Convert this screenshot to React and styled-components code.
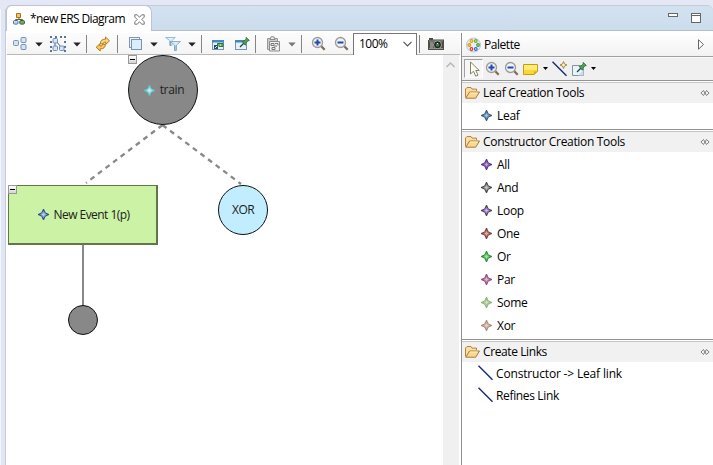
import React from "react";
import styled, { createGlobalStyle } from "styled-components";

const Global = createGlobalStyle`
  * { box-sizing: border-box; }
  html, body { margin: 0; padding: 0; background: #fff; }
  body { font: 12px/16px "Open Sans", "Noto Sans", sans-serif; color: #000; overflow: hidden; }
  svg { display: block; flex: none; overflow: visible; }
`;

const Window = styled.div`
  width: 713px; height: 465px; display: flex; background: #e4e8f6; overflow: hidden;
`;
const Gutter = styled.div`
  width: 6px; flex: none; background: #e1e6f6; border-right: 1px solid #c4cad6;
  margin-top: 9px; border-left: 1px solid #f6f7fc;
`;
const Editor = styled.main`
  flex: 1; min-width: 0; display: flex; flex-direction: column; padding-top: 5px;
`;
const TabBar = styled.header`
  height: 26px; flex: none; display: flex; align-items: stretch;
  background: linear-gradient(#d3e2f1, #cbdcec); border-top: 1px solid #c9cbd2;
  border-radius: 5px 6px 0 0; border-bottom: 1px solid #b4bccd;
`;
const Tab = styled.div`
  width: 146px; height: 26px; margin-top: -1px; display: flex; align-items: center;
  background: #fff; border: 1px solid #bdc3d0; border-bottom: 0; border-radius: 6px 7px 0 0;
  padding: 1px 6px 0 6px;
`;
const WindowButtons = styled.div`
  margin-left: auto; display: flex; gap: 13px; padding: 7px 12px 0 0;
`;
const Text = styled.span`
  white-space: pre; letter-spacing: ${(p) => p.$ls ?? -0.3}px; margin-left: ${(p) => p.$ml ?? 0}px;
`;
const Body = styled.div`
  flex: 1; min-height: 0; display: flex; background: #fff; padding: 2px 0 0 1px;
`;
const Work = styled.section`
  width: 453px; flex: none; display: flex; flex-direction: column;
`;
const Toolbar = styled.div`
  height: 22px; flex: none; display: flex; align-items: center; padding-top: 1px;
  background: linear-gradient(#fcfcfc, #f4f4f4); border-bottom: 1px solid #b8b8b8; padding-left: 5px;
`;
const Slot = styled.span`
  margin-left: ${(p) => p.$ml}px; flex: none; display: block;
`;
const Separator = styled.i`
  width: 1px; height: 18px; background: #858585; margin-left: ${(p) => p.$ml}px; flex: none;
`;
const ZoomBox = styled.div`
  width: 64px; height: 22px; flex: none; margin-left: 3px; background: #fff;
  border: 1px solid #777; border-bottom: 0; display: flex; align-items: center;
  justify-content: space-between; padding: 0 4px 1px 5px; align-self: flex-start; margin-top: -1px;
`;
const CanvasRow = styled.div`
  flex: 1; display: flex; min-height: 0;
`;
const Canvas = styled.div`
  flex: 1; position: relative; overflow: hidden; background: #fff; margin-left: 1px;
`;
const Scroll = styled.div`
  width: 16px; flex: none; background: #f0f0f0; padding: 7px 0 0 3px; margin-right: 1px;
`;
const Links = styled.svg`
  position: absolute; left: 0; top: 0;
`;
const Node = styled.div`
  position: absolute; left: ${(p) => p.$x}px; top: ${(p) => p.$y}px;
  width: ${(p) => p.$w}px; height: ${(p) => p.$h ?? p.$w}px;
  display: flex; align-items: center; justify-content: center;
  background: ${(p) => p.$bg}; color: #202020;
`;
const Circle = styled(Node)`
  border: 1px solid #0c1114; border-radius: 50%;
`;
const EventBox = styled(Node)`
  border: solid #62754b; border-width: 1px 2px 2px 1px;
`;
const Collapse = styled.span`
  position: absolute; left: ${(p) => p.$x}px; top: ${(p) => p.$y}px; width: 9px; height: 9px;
  background: linear-gradient(#fff, #d4d4d4); border: 1px solid #989898;
  display: flex; align-items: center; justify-content: center;
  &::after { content: ""; width: 5px; height: 1px; background: #000; }
`;
const Palette = styled.aside`
  flex: 1; min-width: 0; margin-left: 1px; border-left: 1px solid #8f8f8f; background: #fff;
`;
const PaletteHead = styled.div`
  height: 24px; display: flex; align-items: center; padding: 0 9px 0 4px;
  background: linear-gradient(#fff, #f2f2f2); border-bottom: 1px solid #a0a0a0;
`;
const PaletteTools = styled.div`
  height: 23px; display: flex; align-items: center; background: #f0f0f0;
  border-top: 1px solid #fafafa; padding: 0 0 1px 2px;
`;
const Pressed = styled.span`
  width: 19px; height: 19px; border: 1px solid; border-color: #a0a0a0 #fff #fff #a0a0a0;
  background: #f6f6f6; padding: 1px 0 0 2px; flex: none;
`;
const Drawer = styled.section`
  height: ${(p) => p.$h}px; border-top: 1px solid #929292;
`;
const DrawerHead = styled.div`
  height: 21px; display: flex; align-items: center; background: #f1f1f1; margin-top: 1px;
  border-top: 1px solid #c6c6c6; padding: 0 3px 1px;
`;
const Items = styled.div`
  padding-top: ${(p) => p.$pad ?? 1}px;
`;
const Item = styled.div`
  height: ${(p) => p.$h ?? 23}px; display: flex; align-items: center; padding-left: ${(p) => p.$pl ?? 19}px;
`;
const End = styled.span`
  margin-left: auto;
`;

const Svg = ({ w = 16, h = 16, children, crisp }) => (
  <svg width={w} height={h} viewBox={`0 0 ${w} ${h}`} fill="none" shapeRendering={crisp ? "crispEdges" : undefined}>
    {children}
  </svg>
);

const Arrow = ({ ml, color = "#222" }) => (
  <Slot $ml={ml}><Svg w={8} h={5}><path d="M0.3 .5H7.7L4 4.5Z" fill={color} /></Svg></Slot>
);

const Star = ({ edge, fill, light = "#fff" }) => (
  <Svg w={11} h={11}>
    <path d="M5 0h1L7.6 3.4 11 5v1L7.6 7.6 6 11H5L3.4 7.6 0 6V5l3.4-1.6Z" fill={edge} />
    <path d="M5.5 2 7 4l2 1.5L7 7 5.5 9 4 7 2 5.5 4 4Z" fill={fill} />
    <path d="M5 4h1v1h1v1H6v1H5V6H4V5h1z" fill={light} opacity=".4" />
  </Svg>
);

const Magnifier = ({ plus }) => (
  <Svg>
    <path d="m10.3 10.3 3.4 3.4" stroke="#826a55" strokeWidth="2.3" />
    <circle cx="6.5" cy="6.5" r="5" fill="#edf3ff" stroke="#a09a96" strokeWidth="1.3" />
    <path d={plus ? "M6.5 3.5v6M3.5 6.5h6" : "M3.5 6.5h6"} stroke="#2747ad" strokeWidth="2" />
  </Svg>
);

const DiagramIcon = () => (
  <Svg w={12} h={12}>
    <path d="M6 4v3M2.5 9V6.5h7V9" stroke="#6b5a3c" />
    <path d="M3.5 .5h4v4h-4z" fill="#f5c45c" stroke="#a3741d" />
    <rect x=".5" y="7.5" width="4.5" height="3.6" rx="1" fill="#c3d6ef" stroke="#54719d" />
    <rect x="6.8" y="7.5" width="4.6" height="3.6" rx="1" fill="#70b56b" stroke="#315f37" />
  </Svg>
);

const CloseIcon = () => (
  <Svg w={11} h={11}>
    <path d="M.8.8h2.5l2.2 2.5L7.7.8h2.5v2.3L7.8 5.5l2.4 2.4v2.3H7.7L5.5 7.7l-2.2 2.5H.8V7.9l2.4-2.4L.8 3.1Z" stroke="#66686c" fill="#fff" strokeWidth=".9" />
  </Svg>
);

const block = { fill: "#d5e4f5", stroke: "#7490b5" };
const BlocksIcon = () => (
  <Svg>
    <rect x="1.5" y="4.5" width="5" height="5" rx="1" {...block} />
    <rect x="9" y="1.5" width="5" height="5" rx="1" {...block} />
    <rect x="9" y="8.5" width="5" height="5" rx="1" {...block} />
  </Svg>
);
const SelectIcon = () => (
  <Svg>
    <path d="M0 0h2v2H0zM5 0h2v2H5zM10 0h2v2h-2zM14 0h2v2h-2zM0 5h2v2H0zM14 5h2v2h-2zM0 10h2v2H0zM14 10h2v2h-2zM0 14h2v2H0zM14 14h2v2h-2z" fill="#5a7398" />
    <path d="m6 5 5 6M5 7v4" stroke="#46658d" />
    <rect x="3" y="2.5" width="4.5" height="4.5" rx="1" {...block} />
    <rect x="3" y="10" width="4.5" height="4.5" rx="1" {...block} />
    <rect x="9.5" y="10" width="4.5" height="4.5" rx="1" {...block} />
  </Svg>
);
const RefreshIcon = () => (
  <Svg>
    <path d="M10.5 1 14.5 4.8 10.8 8.3V6.2C8.8 5.9 8.3 6.7 8 8L5.3 7.8C5.4 4.5 7.2 3 10.5 3.2Z" fill="#f9d67b" stroke="#b57b1d" />
    <path d="M5.2 15 1.2 11.2 4.9 7.8V9.9C6.9 10.2 7.5 9.4 7.8 8L10.4 8.3C10.3 11.5 8.5 13 5.2 12.8Z" fill="#f7ca5c" stroke="#b57b1d" />
  </Svg>
);
const LayersIcon = () => (
  <Svg crisp>
    <path d="M1.5 1.5h10v10h-10z" fill="#edf4fa" stroke="#8198b4" />
    <path d="M3.5 3.5h10v10h-10z" fill="#d9eef9" stroke="#7793b5" />
  </Svg>
);
const FilterIcon = () => (
  <Svg>
    <path d="M.5 1.5h9.8L7 4.5v5H4.8v-5Z" fill="#dff3fc" stroke="#9bbdd3" />
    <path d="M5.5 5.5h10L11.5 9v5.5H9.5V9Z" fill="#d5effa" stroke="#8eb1cb" />
    <path d="M5.3 5v4.5M10 9.5v5" stroke="#7199c5" />
  </Svg>
);
const PinShape = () => (
  <g>
    <path d="m6 11 4-4" stroke="#293f35" strokeWidth="1.2" />
    <path d="m8.3 5.5 1.5-.2 2.4-2.1V1.5l3.1 3-1.6.4-2.3 2.6-.1 1.7Z" fill="#57a35b" stroke="#28763b" />
  </g>
);
const WindowIcon = ({ pin }) => (
  <Svg>
    <rect x={pin ? 1.5 : 2.5} y="4.5" width="11" height="9" fill={pin ? "#e4f0fa" : "#e7eff1"} stroke="#7594b0" />
    <path d={pin ? "M1 4h12v2.5H1z" : "M2 4h12v2.5H2z"} fill="#4486bf" />
    {pin ? <PinShape /> : (
      <>
        <path d="M4 9h4v4H4z" fill="#234b73" />
        <path d="m5 12 5-5" stroke="#ddeef7" />
        <path d="M7.5 10.5v-3H13v3H9" fill="#64b15c" stroke="#277443" />
        <path d="M10 8.5h1v1h-1z" fill="#fff" />
      </>
    )}
  </Svg>
);
const NotePin = () => (
  <Svg>
    <path d="M1.5 4.5h11v10h-11z" fill="#e4f5fd" stroke="#87919b" />
    <path d="M7 14.5h5.5V9Z" fill="#c7def0" />
    <PinShape />
  </Svg>
);
const ClipboardIcon = () => (
  <Svg>
    <path d="M1.5 2.5h10v11h-10z" fill="#ccc" stroke="#969696" />
    <path d="M4 3.5 5 .8h3l1 2.7Z" fill="#eee" stroke="#8b8b8b" />
    <path d="M3.5 5.5h10v9.5h-10z" fill="#f1f1f1" stroke="#8b8b8b" />
    <path d="M5 7.5h3v2H5zM9 7.5h3v2M6 11.5h3v2H6zM8 10h3" stroke="#777" />
  </Svg>
);
const CameraIcon = () => (
  <Svg>
    <path d="M1 4V2h4v1.5h11V14H0V4Z" fill="#4b4e48" />
    <path d="M1 5h14M1 12.5h14" stroke="#92948c" />
    <path d="M2 6h3v6H2z" fill="#898b83" />
    <circle cx="9.5" cy="8.8" r="4" fill="#1d251f" stroke="#a7aaa0" />
    <circle cx="9.5" cy="8.8" r="1.9" fill="#467b50" />
    <path d="M9 7h1v1H9z" fill="#e8f3e9" />
  </Svg>
);
const PaletteIcon = () => (
  <Svg>
    <circle cx="7.5" cy="8" r="7" fill="#e5edf6" stroke="#b5c8dd" />
    <circle cx="5.5" cy="4" r="1.3" stroke="#dca414" fill="#fff0a0" strokeWidth="1.2" />
    <circle cx="9.8" cy="4" r="1.3" stroke="#7ba722" fill="#e5f5b5" strokeWidth="1.2" />
    <circle cx="3.3" cy="8" r="1.3" stroke="#ed9800" fill="#fd4" strokeWidth="1.2" />
    <circle cx="12" cy="8" r="1.3" stroke="#3d9a4c" fill="#c7edbb" strokeWidth="1.2" />
    <circle cx="5.5" cy="12" r="1.3" stroke="#dc3e26" fill="#fff" strokeWidth="1.2" />
    <circle cx="9.8" cy="12" r="1.3" stroke="#3b69b8" fill="#fff" strokeWidth="1.2" />
  </Svg>
);
const CursorIcon = () => (
  <Svg><path d="M3.5 1v12l3-2.8 2.2 5 2.3-1-2.2-4.7H12.3Z" fill="#fffef0" stroke="#77745f" strokeWidth=".9" /></Svg>
);
const NoteIcon = () => (
  <Svg>
    <path d="M.5 3.5h14v7l-3.5 3H.5Z" fill="#ffec70" stroke="#c59b16" />
    <path d="M1 9h13v2l-3 2H1Z" fill="#f9d738" />
    <path d="M11 13.5v-3h3.5Z" fill="#d7a719" />
  </Svg>
);
const LinkIcon = ({ spark }) => (
  <Svg>
    <path d={spark ? "m.5 .8 14 14" : "m.5-.3 14 14"} stroke="#152b7e" strokeWidth="1.4" />
    {spark && <path d="m11.5 .5 1 2.5 2.5 1-2.5 1-1 2.5-1-2.5L8 4l2.5-1Z" fill="#fff4c8" stroke="#a9883d" />}
  </Svg>
);
const FolderIcon = () => (
  <Svg w={15} h={12}>
    <path d="M.5 10.5V2L2 .5h4l1 1.6h4.5v2" fill="#f9dfa5" stroke="#b5833a" />
    <path d="M.8 11.2 4.5 5h10l-3.8 6.2Z" fill="#fad893" stroke="#ac7933" />
    <path d="M5 6h7.5" stroke="#fff1c4" />
  </Svg>
);
const UnpinIcon = () => (
  <Svg w={10} h={8}>
    <path d="M3.5 1.5 .9 4l2.6 2.5M6.5 1.5 9.1 4 6.5 6.5M3.5 1.5l3 5M6.5 1.5l-3 5" stroke="#77736c" strokeWidth=".9" />
  </Svg>
);

const constructors = [
  ["All", "#58368f", "#8d68b8"],
  ["And", "#4a4a4a", "#999"],
  ["Loop", "#4d4657", "#a080cf"],
  ["One", "#7a4343", "#bd7777"],
  ["Or", "#2f8e3b", "#70c477"],
  ["Par", "#a04680", "#b091a0"],
  ["Some", "#8ab878", "#b3c7a4"],
  ["Xor", "#b08f7d", "#c4b6ad"],
];

const DrawerTitle = ({ children, ls }) => (
  <DrawerHead>
    <FolderIcon /><Text $ml={3} $ls={ls}>{children}</Text><End><UnpinIcon /></End>
  </DrawerHead>
);

export default function App() {
  return (
    <Window>
      <Global />
      <Gutter />
      <Editor>
        <TabBar>
          <Tab>
            <DiagramIcon />
            <Text $ml={5} $ls={-0.6}>*new ERS Diagram</Text>
            <End><CloseIcon /></End>
          </Tab>
          <WindowButtons>
            <Svg w={10} h={10} crisp><path d="M.5.5h9v3h-9z" fill="#fff" stroke="#666" /></Svg>
            <Svg w={10} h={10} crisp><path d="M.5.5h9v9h-9zM.5 2.5h9" fill="#fff" stroke="#666" /></Svg>
          </WindowButtons>
        </TabBar>
        <Body>
          <Work>
            <Toolbar>
              <Slot $ml={0}><BlocksIcon /></Slot>
              <Arrow ml={7} />
              <Slot $ml={7}><SelectIcon /></Slot>
              <Arrow ml={7} />
              <Separator $ml={5} />
              <Slot $ml={8}><RefreshIcon /></Slot>
              <Separator $ml={6} />
              <Slot $ml={10}><LayersIcon /></Slot>
              <Arrow ml={6} />
              <Slot $ml={7}><FilterIcon /></Slot>
              <Arrow ml={7} />
              <Separator $ml={5} />
              <Slot $ml={8}><WindowIcon /></Slot>
              <Slot $ml={8}><WindowIcon pin /></Slot>
              <Separator $ml={5} />
              <Slot $ml={10}><ClipboardIcon /></Slot>
              <Arrow ml={6} color="#777" />
              <Separator $ml={5} />
              <Slot $ml={9}><Magnifier plus /></Slot>
              <Slot $ml={7}><Magnifier /></Slot>
              <ZoomBox>
                <Text $ls={-0.5}>100%</Text>
                <Svg w={9} h={6}><path d="m.5 .8 4 4 4-4" stroke="#555" strokeWidth="1.2" /></Svg>
              </ZoomBox>
              <Separator $ml={2} />
              <Slot $ml={8}><CameraIcon /></Slot>
            </Toolbar>
            <CanvasRow>
              <Canvas>
                <Links width="435" height="410" fill="none" stroke="#888" strokeWidth="2.3">
                  <path d="M154.5 70 78 128M154.5 70 233 129" strokeDasharray="5 4.5" />
                  <path d="M75 189V250" strokeWidth="2" />
                </Links>
                <Circle $x={120} $y={0} $w={70} $bg="#888">
                  <Slot $ml={2}><Star edge="#52c8ce" fill="#b8d6d3" /></Slot><Text $ml={5}>train</Text>
                </Circle>
                <Collapse $x={120} $y={0} />
                <EventBox $x={0} $y={130} $w={150} $h={60} $bg="#cbf2a5">
                  <Slot $ml={2}><Star edge="#324f89" fill="#82a9df" /></Slot><Text $ml={5} $ls={-0.55}>New Event 1(p)</Text>
                </EventBox>
                <Collapse $x={0} $y={130} />
                <Circle $x={210} $y={130} $w={50} $bg="#c1edff"><Text $ls={-0.6}>XOR</Text></Circle>
                <Circle $x={60} $y={250} $w={30} $bg="#888" />
              </Canvas>
              <Scroll>
                <Svg w={9} h={6}><path d="m.5 5 4-4 4 4" stroke="#b8b8b8" strokeWidth="1.5" /></Svg>
              </Scroll>
            </CanvasRow>
          </Work>
          <Palette>
            <PaletteHead>
              <PaletteIcon /><Text $ml={2} $ls={-0.45}>Palette</Text>
              <End><Svg w={6} h={11}><path d="M.5.8v9.4l5-4.7Z" stroke="#666" fill="#fff" /></Svg></End>
            </PaletteHead>
            <PaletteTools>
              <Pressed><CursorIcon /></Pressed>
              <Slot $ml={2}><Magnifier plus /></Slot>
              <Slot $ml={3}><Magnifier /></Slot>
              <Slot $ml={3}><NoteIcon /></Slot>
              <Slot $ml={4}><Svg w={5} h={3}><path d="M0 0h5L2.5 3Z" fill="#000" /></Svg></Slot>
              <Slot $ml={4}><LinkIcon spark /></Slot>
              <Slot $ml={3}><NotePin /></Slot>
              <Slot $ml={4}><Svg w={5} h={3}><path d="M0 0h5L2.5 3Z" fill="#000" /></Svg></Slot>
            </PaletteTools>
            <Drawer $h={49}>
              <DrawerTitle ls={-0.33}>Leaf Creation Tools</DrawerTitle>
              <Items><Item><Star edge="#3d5c7c" fill="#6f99b9" /><Text $ml={5}>Leaf</Text></Item></Items>
            </Drawer>
            <Drawer $h={210}>
              <DrawerTitle ls={-0.32}>Constructor Creation Tools</DrawerTitle>
              <Items>
                {constructors.map(([name, edge, fill]) => (
                  <Item key={name}><Star edge={edge} fill={fill} /><Text $ml={5}>{name}</Text></Item>
                ))}
              </Items>
            </Drawer>
            <Drawer $h={126}>
              <DrawerTitle ls={-0.4}>Create Links</DrawerTitle>
              <Items $pad={1}>
                <Item $h={22} $pl={16}><LinkIcon /><Text $ml={2} $ls={-0.17}>{"Constructor -> Leaf link"}</Text></Item>
                <Item $h={22} $pl={16}><LinkIcon /><Text $ml={2} $ls={-0.35}>Refines Link</Text></Item>
              </Items>
            </Drawer>
          </Palette>
        </Body>
      </Editor>
    </Window>
  );
}
